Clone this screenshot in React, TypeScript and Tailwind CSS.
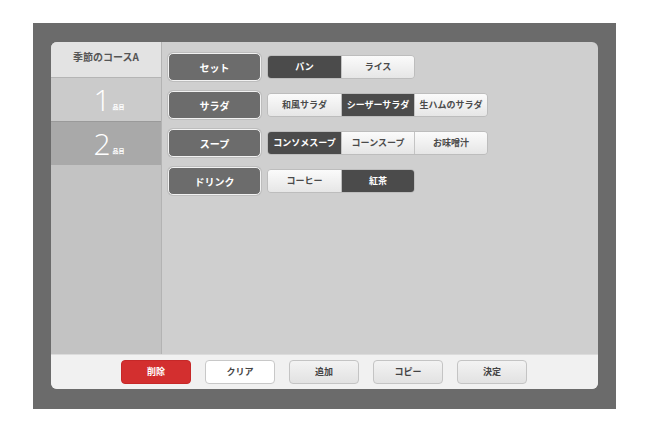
import React from "react";

const FONT = { fontFamily: '"Noto Sans CJK JP", "Noto Sans", sans-serif' };

interface RowProps {
  label: string;
  options: string[];
  selected: number;
}

function OptionRow({ label, options, selected }: RowProps) {
  return (
    <div className="flex h-[28px] items-center">
      <div className="flex h-[28px] w-[93px] items-center justify-center rounded-[5px] border-[1.5px] border-[#f2f2f2] bg-[#6c6c6c] text-[10px] font-bold text-white shadow-[0_0_0_1px_#bdbdbd]">
        {label}
      </div>
      <div className="ml-[6px] flex h-[24px] overflow-hidden rounded-[4px] border border-[#bdbdbd]">
        {options.map((opt, i) =>
          i === selected ? (
            <div
              key={opt}
              className="flex w-[73px] items-center justify-center border-l border-[#bdbdbd] bg-[#4b4b4b] text-[9px] font-bold text-white first:border-l-0"
            >
              {opt}
            </div>
          ) : (
            <div
              key={opt}
              className="flex w-[73px] items-center justify-center border-l border-[#c4c4c4] bg-gradient-to-b from-[#fbfbfb] to-[#e6e6e6] text-[9px] font-bold text-[#4a4a4a] first:border-l-0"
            >
              {opt}
            </div>
          )
        )}
      </div>
    </div>
  );
}

function FooterButton({ children, tone = "gray" }: { children: React.ReactNode; tone?: "red" | "white" | "gray" }) {
  const look =
    tone === "red"
      ? "border-[#c62828] bg-[#d32f2f] text-white"
      : tone === "white"
        ? "border-[#c8c8c8] bg-white text-[#444]"
        : "border-[#c4c4c4] bg-gradient-to-b from-[#f3f3f3] to-[#e2e2e2] text-[#444]";
  return (
    <button className={`flex h-[24px] w-[70px] items-center justify-center rounded-[4px] border text-[9px] font-bold ${look}`}>
      {children}
    </button>
  );
}

function Course({ n, dark }: { n: string; dark?: boolean }) {
  return (
    <div
      className={`flex h-[44px] items-center justify-center border-t text-white ${
        dark ? "border-[#9a9a9a] bg-[#a9a9a9]" : "border-[#b5b5b5] bg-[#cbcbcb]"
      }`}
    >
      <span className="ml-[6px] text-[30px] font-light leading-none" style={{ fontFamily: '"Open Sans", sans-serif' }}>
        {n}
      </span>
      <span className="ml-[2px] mt-[14px] text-[6px] font-bold">品目</span>
    </div>
  );
}

export default function App() {
  return (
    <div className="h-[433px] w-[650px] bg-white pl-[33px] pt-[23px]" style={FONT}>
      <div className="h-[386px] w-[583px] bg-[#6b6b6b] pl-[18px] pt-[19px]">
        <div className="flex h-[347px] w-[547px] flex-col overflow-hidden rounded-[6px] bg-[#cfcfcf]">
          <div className="flex flex-1">
            {/* sidebar */}
            <div className="flex w-[111px] flex-col border-r border-[#b3b3b3] bg-[#c3c3c3]">
              <div className="flex h-[35px] items-start justify-center bg-[#e3e3e3] pt-[7px] text-[10px] font-bold text-[#555]">
                季節のコースA
              </div>
              <Course n="1" />
              <Course n="2" dark />
            </div>
            {/* main */}
            <div className="flex flex-1 flex-col gap-[10px] pl-[6px] pt-[11px]">
              <OptionRow label="セット" options={["パン", "ライス"]} selected={0} />
              <OptionRow label="サラダ" options={["和風サラダ", "シーザーサラダ", "生ハムのサラダ"]} selected={1} />
              <OptionRow label="スープ" options={["コンソメスープ", "コーンスープ", "お味噌汁"]} selected={0} />
              <OptionRow label="ドリンク" options={["コーヒー", "紅茶"]} selected={1} />
            </div>
          </div>
          {/* footer */}
          <div className="flex h-[35px] items-center gap-[14px] border-t border-[#dcdcdc] bg-[#f1f1f1] pl-[70px]">
            <FooterButton tone="red">削除</FooterButton>
            <FooterButton tone="white">クリア</FooterButton>
            <FooterButton>追加</FooterButton>
            <FooterButton>コピー</FooterButton>
            <FooterButton>決定</FooterButton>
          </div>
        </div>
      </div>
    </div>
  );
}
